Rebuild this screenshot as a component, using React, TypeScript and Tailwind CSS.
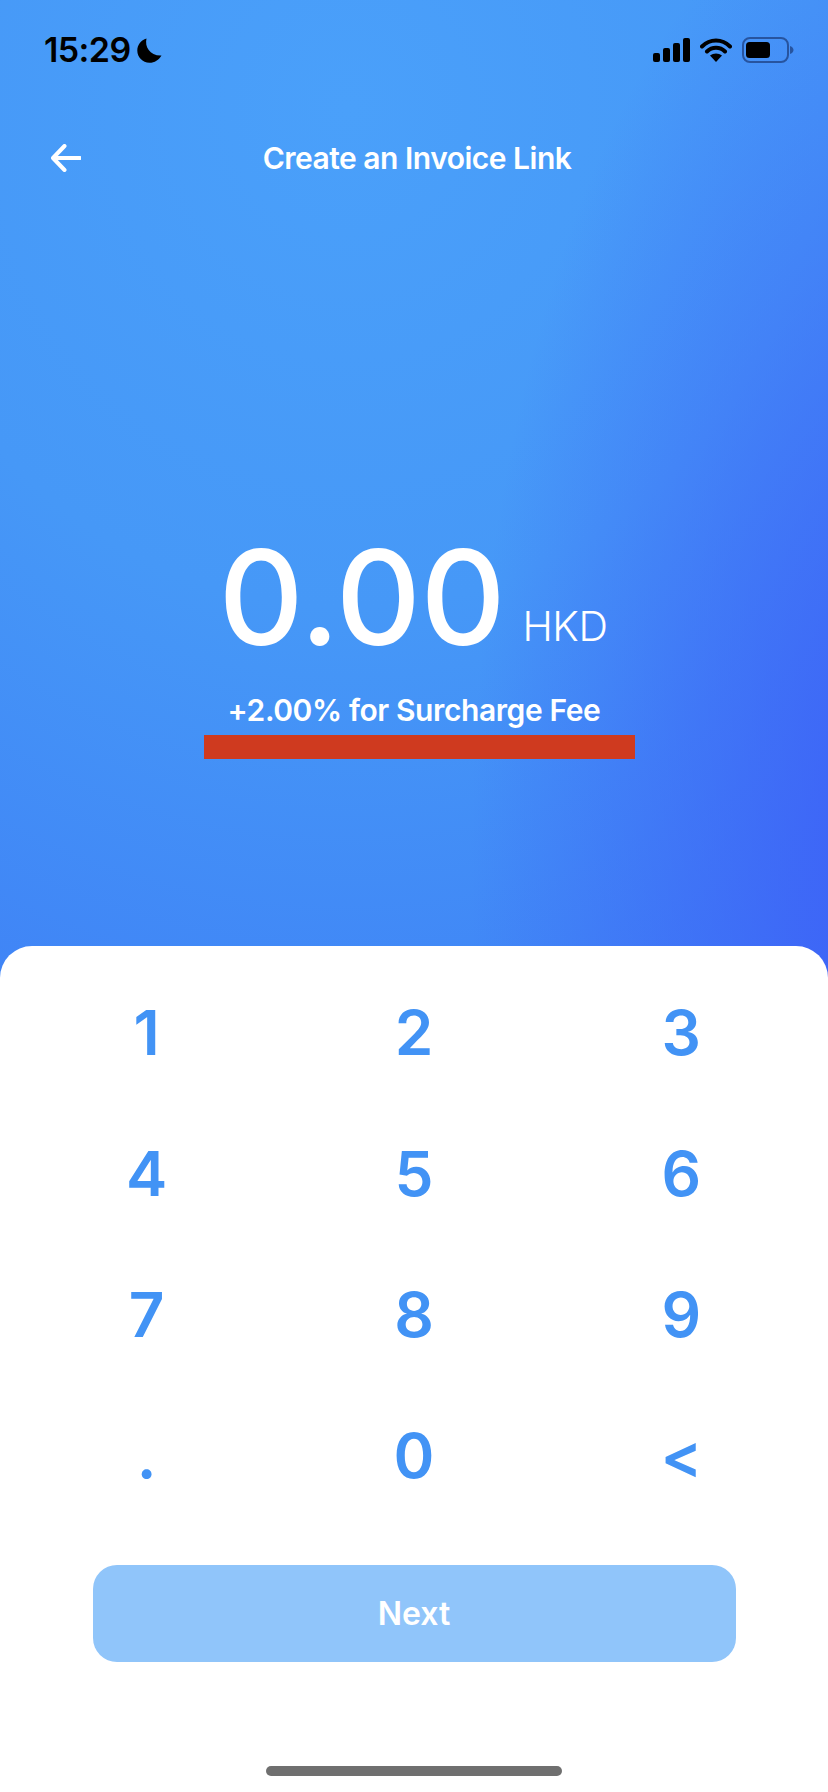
export default function App() {
  const keys = ["1", "2", "3", "4", "5", "6", "7", "8", "9", ".", "0", "<"];
  return (
    <div className="w-[828px] h-[1792px] flex flex-col overflow-hidden bg-[radial-gradient(440px_1000px_at_110%_48%,#3d5ff7_0%,#3f6cf700_100%),radial-gradient(950px_1000px_at_42%_6%,#4aa0fa_0%,#4698f7_50%,#3f82f6_100%)] font-['Inter',sans-serif]">
      <div className="h-[116px] shrink-0 pl-[44px] pr-[34px] pt-[30px] flex justify-between items-start">
        <div className="flex items-center gap-[6px] h-[40px]">
          <span className="text-[34px] font-semibold leading-[40px] text-black tracking-[-0.6px]">15:29</span>
          <svg width="25" height="25" viewBox="0 0 25 25"><path d="M9.5 0.5C7.5 9 13 18 24.5 17.5C22 22 17.5 24.8 12.5 24.8C5.5 24.8 0.3 19 0.3 12.5C0.3 7 4 2 9.5 0.5Z" fill="#000" /></svg>
        </div>
        <div className="flex items-center h-[40px]">
          <svg width="37" height="24" viewBox="0 0 37 24" className="mr-[10px]">
            <rect x="0" y="15" width="7" height="9" rx="2" fill="#000" />
            <rect x="10" y="10" width="7" height="14" rx="2" fill="#000" />
            <rect x="20" y="5" width="7" height="19" rx="2" fill="#000" />
            <rect x="30" y="0" width="7" height="24" rx="2" fill="#000" />
          </svg>
          <svg width="32" height="24" viewBox="0 0 32 24" className="mr-[10px]">
            <path d="M2 8.5C10 0.5 22 0.5 30 8.5M7 13.5C12 8.5 20 8.5 25 13.5" fill="none" stroke="#000" strokeWidth="4" strokeLinecap="round" />
            <path d="M16 24L10 17.5C13.5 14.8 18.5 14.8 22 17.5Z" fill="#000" />
          </svg>
          <svg width="52" height="26" viewBox="0 0 52 26">
            <rect x="1" y="1" width="45" height="24" rx="7" fill="none" stroke="#27549f" strokeWidth="2" />
            <rect x="4" y="5" width="24" height="16" rx="3.5" fill="#000" />
            <path d="M48 9C50.5 10 51.5 11.5 51.5 13C51.5 14.5 50.5 16 48 17Z" fill="#27549f" />
          </svg>
        </div>
      </div>
      <div className="relative h-[84px] shrink-0 flex items-center justify-center">
        <svg width="30" height="28" viewBox="0 0 30 28" className="absolute left-[51px] top-[28px]">
          <path d="M13.5 2L2 14L13.5 26M3 14H29" fill="none" stroke="#fff" strokeWidth="4" strokeLinecap="round" strokeLinejoin="round" />
        </svg>
        <span className="text-[30px] font-semibold text-white tracking-[-0.5px] translate-x-[3px]">Create an Invoice Link</span>
      </div>
      <div className="flex-1 flex flex-col items-center justify-start pt-[322px]">
        <div className="flex items-baseline gap-[17px] h-[150px] leading-none -translate-x-[1px]">
          <span className="text-[132px] font-medium text-white leading-[150px] tracking-[-0.4px]">0.00</span>
          <span className="text-[41px] font-light text-white leading-none tracking-[-0.4px] -translate-y-[4px]">HKD</span>
        </div>
        <span className="text-[30px] font-semibold text-white leading-[40px] mt-[18px] tracking-[-0.4px]">+2.00% for Surcharge Fee</span>
        <div className="w-[431px] h-[24px] bg-[#cf3a1f] mt-[5px] translate-x-[5px]" />
      </div>
      <div className="h-[846px] shrink-0 bg-white rounded-t-[32px] flex flex-col items-center pt-[16px]">
        <div className="w-full px-[13px] grid grid-cols-3">
          {keys.map((k) => (
            <div key={k} className="h-[141px] flex items-center justify-center text-[62px] font-semibold text-[#4293f5] leading-none">
              {k}
            </div>
          ))}
        </div>
        <div className="mt-[39px] w-[643px] h-[97px] rounded-[24px] bg-[#90c5fa] flex items-center justify-center text-[32px] font-semibold text-white">
          Next
        </div>
        <div className="mt-[104px] w-[296px] h-[10px] rounded-full bg-[#6f6f6f]" />
      </div>
    </div>
  );
}
